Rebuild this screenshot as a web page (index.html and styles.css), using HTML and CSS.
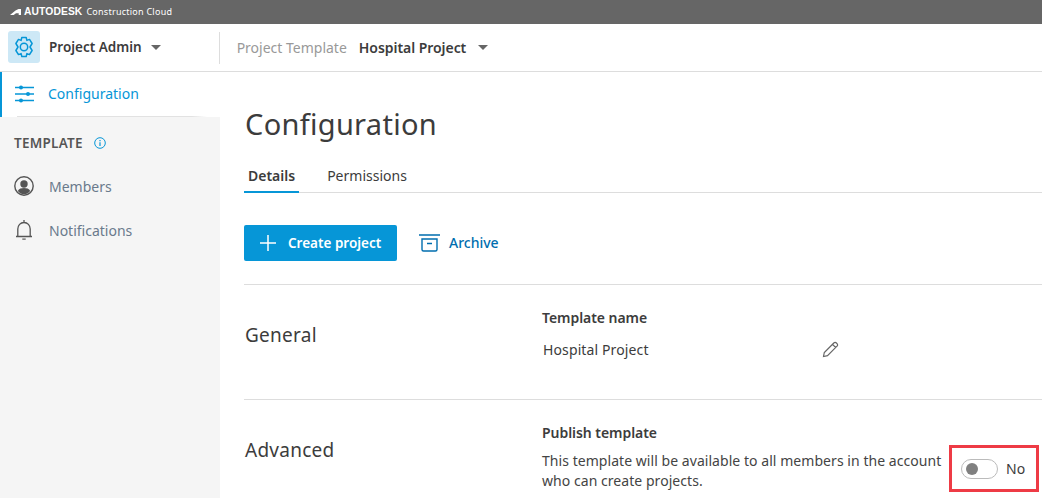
FILE: index.html
```html
<!DOCTYPE html>
<html lang="en">
<head>
<meta charset="utf-8">
<title>Configuration</title>
<link rel="stylesheet" href="styles.css">
</head>
<body>
<div class="topbar">
  <svg class="logo" width="11" height="6" viewBox="0 0 11 6"><path d="M0 6 5.500 1.500 8.500 0H11V6H8.700V4.300H6L3.700 6Z" fill="#fff"/></svg>
  <span class="brand">AUTODESK</span><span class="brand-sub">Construction Cloud</span>
</div>
<header class="header">
  <div class="app-icon">
    <svg width="22" height="22" viewBox="0 0 22 22" fill="none" stroke="#0696d7" stroke-width="1.5"><path d="M8.800 1.500h4.400l.7 2.900 2.600-1 2.600 4.100-2.100 3.500 2.100 3.500-2.600 4.100-2.600-1-.7 2.900H8.800l-.7-2.900-2.600 1-2.600-4.100L5 11 2.900 7.500 5.500 3.400l2.600 1z" stroke-linejoin="round"/><circle cx="11" cy="11" r="3.700"/></svg>
  </div>
  <span class="app-name">Project Admin</span>
  <span class="caret caret-app"></span>
  <span class="divider"></span>
  <span class="crumb-label">Project Template</span>
  <span class="crumb-value">Hospital Project</span>
  <span class="caret caret-crumb"></span>
</header>
<div class="page">
  <aside class="sidebar">
    <a class="nav-active">
      <svg width="20" height="20" viewBox="0 0 20 20" fill="none" stroke="#0696d7" stroke-width="1.300"><path d="M0 3.500h19M0 10h19M0 16.500h19"/><g fill="#0696d7" stroke="none"><circle cx="6" cy="3.500" r="2"/><circle cx="13" cy="10" r="2"/><circle cx="6" cy="16.500" r="2"/></g></svg>
      <span>Configuration</span>
    </a>
    <div class="section-title">
      <span>TEMPLATE</span>
      <svg width="12" height="12" viewBox="0 0 12 12" fill="none" stroke="#0696d7"><circle cx="6" cy="6" r="5.300"/><path d="M6 5.200V9M6 3v1.200" stroke-width="1.200"/></svg>
    </div>
    <a class="nav-item">
      <svg width="20" height="20" viewBox="0 0 20 20"><circle cx="10" cy="10" r="9.200" fill="none" stroke="#555" stroke-width="1.400"/><circle cx="10" cy="8" r="3.700" fill="#555"/><path d="M3.800 15c1.200-2.400 3.500-3 6.200-3s5 .6 6.200 3c-1.500 2-3.700 3.300-6.200 3.300S5.300 17 3.800 15Z" fill="#555"/></svg>
      <span>Members</span>
    </a>
    <a class="nav-item">
      <svg width="20" height="22" viewBox="0 0 20 22" fill="none" stroke="#555" stroke-width="1.300"><path d="M2 17.500h16M3.800 17.500V10c0-3.700 2.600-6.500 6.200-6.500s6.200 2.800 6.200 6.500v7.500M10 1v2.500"/><path d="M8.300 19.500h3.400v1.200H8.300z" fill="#555" stroke="none"/></svg>
      <span>Notifications</span>
    </a>
  </aside>
  <main class="content">
    <h1 class="title">Configuration</h1>
    <nav class="tabs">
      <a class="tab tab-active">Details</a>
      <a class="tab">Permissions</a>
    </nav>
    <div class="actions">
      <button class="btn-primary">
        <svg width="16" height="16" viewBox="0 0 16 16" stroke="#fff" stroke-width="1.500"><path d="M8 0v16M0 8h16"/></svg>
        <span class="btn-text">Create project</span>
      </button>
      <a class="btn-link">
        <svg width="21" height="18" viewBox="0 0 21 18" fill="none" stroke="#006eaf" stroke-width="1.400"><path d="M0 1h21M3 5h15v10.500c0 1-.6 1.500-1.500 1.500h-12c-1 0-1.500-.5-1.500-1.500zM8 9.500h5"/></svg>
        <span class="btn-text">Archive</span>
      </a>
    </div>
    <section class="row row-general">
      <h2 class="row-title">General</h2>
      <div class="row-body">
        <div class="field-label">Template name</div>
        <div class="name-line">
          <span class="name-value">Hospital Project</span>
          <svg width="17" height="17" viewBox="0 0 17 17" fill="none" stroke="#666" stroke-width="1.200"><path d="M1.500 15.500 2.300 11.500 11.800 2c.8-.8 1.800-.8 2.600 0l.6.6c.8.800.8 1.800 0 2.600L5.500 14.700ZM10.500 3.300l3.200 3.200"/></svg>
        </div>
      </div>
    </section>
    <section class="row row-advanced">
      <h2 class="row-title">Advanced</h2>
      <div class="row-body">
        <div class="field-label">Publish template</div>
        <div class="publish">
          <p class="publish-text">This template will be available to all members in the account who can create projects.</p>
          <div class="toggle-box">
            <span class="toggle"><span class="knob"></span></span>
            <span class="toggle-label">No</span>
          </div>
        </div>
      </div>
    </section>
  </main>
</div>
</body>
</html>
```
FILE: styles.css
```css
* { box-sizing: border-box; }
html, body { margin: 0; height: 100%; overflow: hidden; }
body { width: 1042px; height: 498px; background: #fff; color: #3c3c3c; font-family: "Noto Sans", sans-serif; font-size: 14px; }

.topbar { height: 24px; background: #666; display: flex; align-items: center; padding-left: 10px; color: #fff; padding-bottom: 1px; }
.logo { margin-right: 3px; }
.brand { font-family: "Liberation Sans", sans-serif; font-weight: 700; font-size: 10.300px; letter-spacing: .1px; margin-right: 4px; }
.brand-sub { font-size: 9px; letter-spacing: .25px; }

.header { height: 48px; border-bottom: 1px solid #ddd; display: flex; align-items: center; padding-left: 8px; }
.app-icon { width: 32px; height: 32px; background: #cde8f6; border-radius: 3px; display: flex; align-items: center; justify-content: center; margin-bottom: 1px; }
.app-name { font-weight: 600; font-size: 13.500px; margin: 0 0 2px 9px; color: #3c3c3c; }
.caret { width: 0; height: 0; border-left: 5px solid transparent; border-right: 5px solid transparent; border-top: 5px solid #666; }
.caret-app { margin-left: 9px; }
.divider { width: 1px; height: 32px; background: #ddd; margin-left: 58px; }
.crumb-label { margin-left: 17px; color: #999; }
.crumb-value { margin-left: 12px; font-weight: 600; color: #3c3c3c; letter-spacing: -.05px; }
.caret-crumb { margin-left: 12px; }

.page { display: flex; height: 426px; }
.sidebar { width: 220px; flex: none; background: #f5f5f5; }
.nav-active { height: 45px; background: linear-gradient(90deg, transparent 15px, #e2e2e2 15px, #e2e2e2 190px, transparent 205px) bottom / 100% 1px no-repeat, #fff; border-left: 2px solid #0696d7; color: #0696d7; display: flex; align-items: center; gap: 13px; padding: 0 0 2px 13px; font-size: 14px; }
.section-title { display: flex; align-items: center; gap: 11px; padding: 13px 0 0 14px; height: 39px; font-weight: 600; font-size: 13.500px; color: #555; letter-spacing: .25px; }
.nav-item { height: 44px; display: flex; align-items: center; gap: 15px; padding-left: 14px; color: #6a7a8c; font-size: 14px; }
.section-title + .nav-item { margin-top: 8px; }

.content { flex: 1; padding-left: 24px; }
.title { margin: 0; padding: 29px 0 0 1px; font-size: 29px; font-weight: 400; line-height: 46px; color: #3c3c3c; letter-spacing: .3px; }
.tabs { display: flex; gap: 24px; margin-top: 15px; height: 31px; border-bottom: 1px solid #ddd; }
.tab { padding: 0 4px; height: 31px; line-height: 28px; font-size: 14px; color: #3c3c3c; }
.tab-active { font-weight: 600; border-bottom: 2px solid #0696d7; }

.actions { display: flex; align-items: center; margin-top: 32px; gap: 22px; height: 36px; }
.btn-primary { width: 153px; height: 36px; border: 0; border-radius: 2px; background: #0696d7; color: #fff; font: 600 13.500px "Noto Sans", sans-serif; display: flex; align-items: center; gap: 12px; padding: 0 0 0 16px; }
.btn-primary .btn-text { margin-bottom: 0; }
.btn-link { display: flex; align-items: center; gap: 9px; color: #006eaf; font-weight: 500; font-size: 14px; }
.btn-text { margin-bottom: 2px; }

.row { display: flex; border-top: 1px solid #ddd; }
.row-general { margin-top: 23px; height: 115px; }
.row-title { margin: 0; width: 298px; flex: none; padding: 35px 0 0 1px; font-size: 19px; font-weight: 400; color: #3c3c3c; letter-spacing: .25px; line-height: 30px; }
.row-body { flex: 1; padding-top: 23px; }
.field-label { font-weight: 600; font-size: 14px; line-height: 19px; color: #3c3c3c; letter-spacing: -.05px; }
.name-line { display: flex; align-items: center; margin-top: 13px; padding-left: 1px; letter-spacing: .12px; }
.name-value { width: 279px; }
.publish { display: flex; margin-top: 9px; }
.publish-text { margin: 0; width: 407px; line-height: 20px; color: #444; letter-spacing: .05px; }
.toggle-box { width: 90px; height: 47px; margin-top: -6px; border: 3px solid #ee3b45; display: flex; align-items: center; gap: 8px; padding-left: 9px; }
.toggle { width: 37px; height: 20px; border: 1px solid #bbb; border-radius: 10px; background: #fff; display: flex; align-items: center; padding-left: 4px; }
.knob { width: 12px; height: 12px; border-radius: 50%; background: #808080; }
.toggle-label { font-size: 14px; }
```
